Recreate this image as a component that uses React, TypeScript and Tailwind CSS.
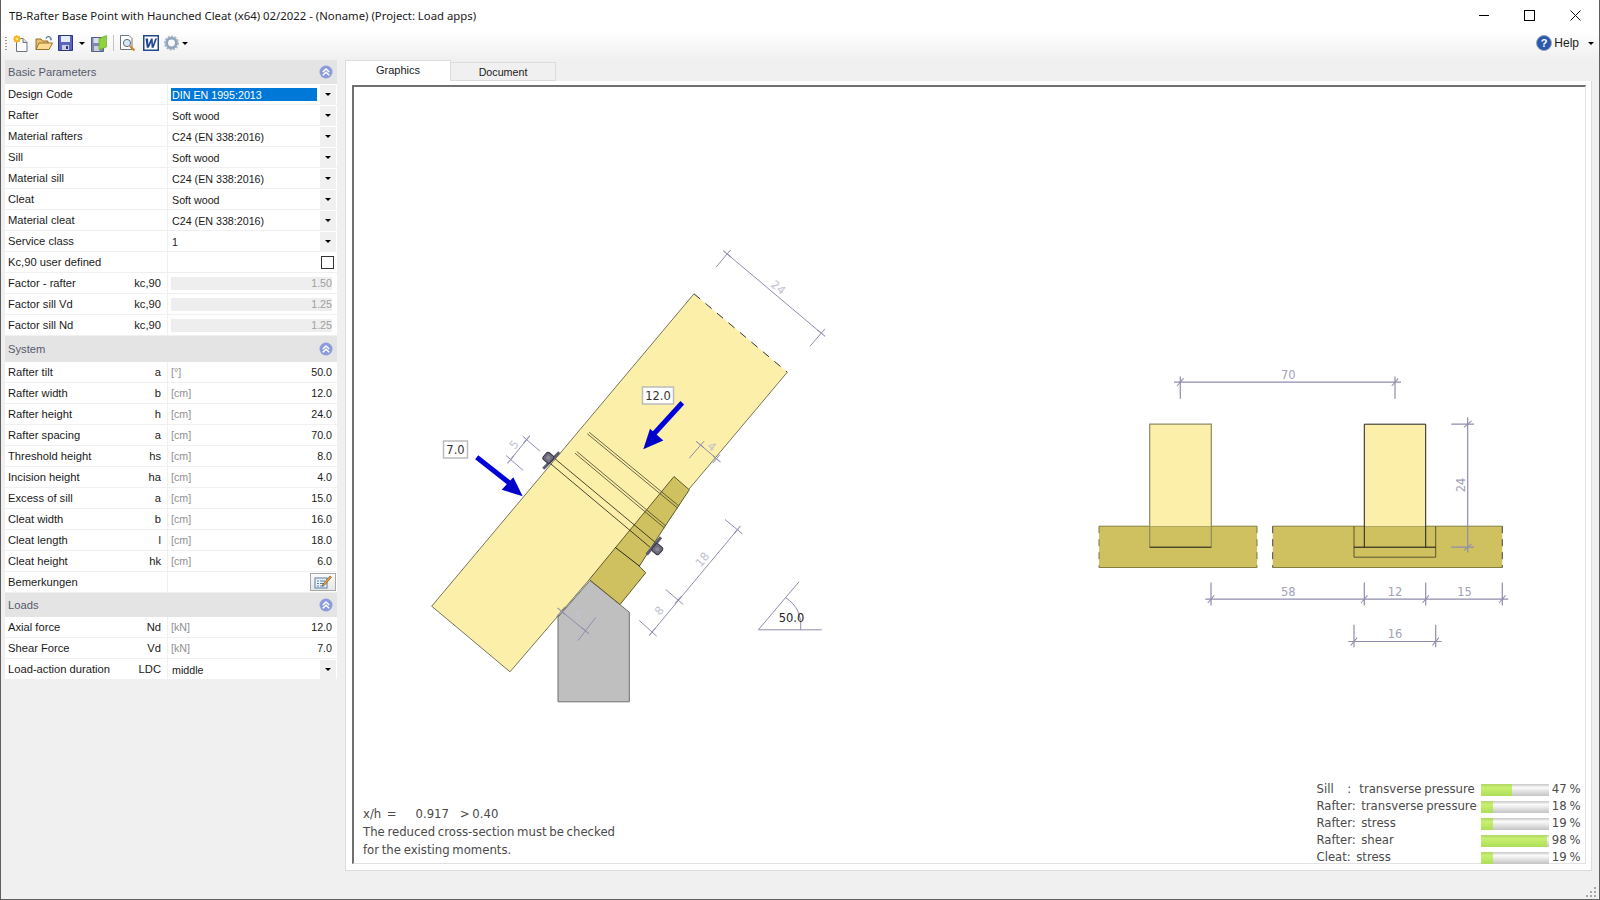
import type { ReactNode } from "react";

const DIM = "#8f8dad";
const DIM_TEXT = "#c3c2d2";
const DIM_TEXT_FLAT = "#a3a2b8";

type Row =
  | { kind: "select"; label: string; sym?: string; value: string; active?: boolean }
  | { kind: "check"; label: string }
  | { kind: "readonly"; label: string; sym: string; value: string }
  | { kind: "number"; label: string; sym: string; unit: string; value: string }
  | { kind: "note"; label: string };

const basicRows: Row[] = [
  { kind: "select", label: "Design Code", value: "DIN EN 1995:2013", active: true },
  { kind: "select", label: "Rafter", value: "Soft wood" },
  { kind: "select", label: "Material rafters", value: "C24 (EN 338:2016)" },
  { kind: "select", label: "Sill", value: "Soft wood" },
  { kind: "select", label: "Material sill", value: "C24 (EN 338:2016)" },
  { kind: "select", label: "Cleat", value: "Soft wood" },
  { kind: "select", label: "Material cleat", value: "C24 (EN 338:2016)" },
  { kind: "select", label: "Service class", value: "1" },
  { kind: "check", label: "Kc,90 user defined" },
  { kind: "readonly", label: "Factor - rafter", sym: "kc,90", value: "1.50" },
  { kind: "readonly", label: "Factor sill Vd", sym: "kc,90", value: "1.25" },
  { kind: "readonly", label: "Factor sill Nd", sym: "kc,90", value: "1.25" },
];

const systemRows: Row[] = [
  { kind: "number", label: "Rafter tilt", sym: "a", unit: "[°]", value: "50.0" },
  { kind: "number", label: "Rafter width", sym: "b", unit: "[cm]", value: "12.0" },
  { kind: "number", label: "Rafter height", sym: "h", unit: "[cm]", value: "24.0" },
  { kind: "number", label: "Rafter spacing", sym: "a", unit: "[cm]", value: "70.0" },
  { kind: "number", label: "Threshold height", sym: "hs", unit: "[cm]", value: "8.0" },
  { kind: "number", label: "Incision height", sym: "ha", unit: "[cm]", value: "4.0" },
  { kind: "number", label: "Excess of sill", sym: "a", unit: "[cm]", value: "15.0" },
  { kind: "number", label: "Cleat width", sym: "b", unit: "[cm]", value: "16.0" },
  { kind: "number", label: "Cleat length", sym: "l", unit: "[cm]", value: "18.0" },
  { kind: "number", label: "Cleat height", sym: "hk", unit: "[cm]", value: "6.0" },
  { kind: "note", label: "Bemerkungen" },
];

const loadRows: Row[] = [
  { kind: "number", label: "Axial force", sym: "Nd", unit: "[kN]", value: "12.0" },
  { kind: "number", label: "Shear Force", sym: "Vd", unit: "[kN]", value: "7.0" },
  { kind: "select", label: "Load-action duration", sym: "LDC", value: "middle" },
];

const results = [
  { label: "Sill     :   transverse pressure", pct: 47 },
  { label: "Rafter:  transverse pressure", pct: 18 },
  { label: "Rafter:  stress", pct: 19 },
  { label: "Rafter:  shear", pct: 98 },
  { label: "Cleat:  stress", pct: 19 },
];

function Caret() {
  return <span className="block h-0 w-0 border-x-[3px] border-t-[3px] border-x-transparent border-t-black" />;
}

function SectionHeader({ title, height }: { title: string; height: string }) {
  return (
    <div className={`flex items-center justify-between bg-[#e4e4e4] pl-[3px] pr-[4px] text-[11.2px] text-[#56596b] ${height}`}>
      <span>{title}</span>
      <svg width="14" height="14" viewBox="0 0 14 14">
        <circle cx="7" cy="7" r="6.5" fill="#8c9bdc" />
        <path d="M3.8 7 7 4l3.2 3M3.8 10.2 7 7.2l3.2 3" fill="none" stroke="#fff" strokeWidth="1.5" />
      </svg>
    </div>
  );
}

function ParamRow({ row, nudge }: { row: Row; nudge?: boolean }) {
  let value: ReactNode = null;
  if (row.kind === "select") {
    value = (
      <div className="flex h-full items-center pl-[3px]">
        <div className={`flex h-[13px] w-[146px] items-center pl-[1px] pt-[1px] ${row.active ? "bg-[#0078d7] text-white" : ""}`}>
          {row.value}
        </div>
        <div className="ml-[3px] flex h-[19px] w-[16px] items-center justify-center bg-[#f0f0f0]">
          <Caret />
        </div>
      </div>
    );
  } else if (row.kind === "check") {
    value = (
      <div className="flex h-full items-center justify-end pr-[3px]">
        <div className="h-[13px] w-[13px] border border-[#333] bg-white" />
      </div>
    );
  } else if (row.kind === "readonly") {
    value = (
      <div className="flex h-full items-center pl-[3px] pr-[5px]">
        <div className="flex h-[13px] w-full items-center justify-end bg-[#eeeeee] text-[#a0a0a0]">{row.value}</div>
      </div>
    );
  } else if (row.kind === "number") {
    value = (
      <div className="flex h-full items-center justify-between pl-[3px] pr-[5px]">
        <span className="text-[#909090]">{row.unit}</span>
        <span>{row.value}</span>
      </div>
    );
  } else {
    value = (
      <div className="flex h-full items-center justify-end pr-[1px]">
        <div className="flex h-[18px] w-[26px] items-center justify-center border border-[#a8a8a8] bg-gradient-to-b from-[#fbfbfb] to-[#e6e6e6]">
          <svg width="18" height="14" viewBox="0 0 18 14">
            <rect x="1" y="3" width="12" height="10" fill="#eaf2fb" stroke="#5b7ea6" />
            <path d="M3 6h2M3 8.5h2M3 11h2M6 6h5M6 8.5h4M6 11h4" stroke="#5b7ea6" strokeWidth="1" />
            <path d="M9 9l7-8 1.5 1.2-7 8-2.2.8z" fill="#e8a33c" stroke="#6a4a14" strokeWidth=".6" />
          </svg>
        </div>
      </div>
    );
  }
  const sym = "sym" in row ? row.sym : undefined;
  return (
    <div className="flex h-[21px] border-b border-[#f0f0f0] bg-white">
      <div className={`flex w-[162px] items-center justify-between pl-[3px] pr-[6px] text-[11.2px] ${nudge ? "pt-[1px]" : ""}`}>
        <span>{row.label}</span>
        {sym && <span>{sym}</span>}
      </div>
      <div className={`flex-1 border-l border-[#f0f0f0] text-[10.7px] ${nudge ? "pt-[1px]" : ""}`}>{value}</div>
    </div>
  );
}

function Seg({ d, c = DIM, w = 1 }: { d: string; c?: string; w?: number }) {
  return <path d={d} fill="none" stroke={c} strokeWidth={w} />;
}

function DimText({ x, y, r = 0, children }: { x: number; y: number; r?: number; children: string }) {
  return (
    <text
      x={x}
      y={y}
      fontSize="11.5"
      fill={r % 90 === 0 ? DIM_TEXT_FLAT : DIM_TEXT}
      textAnchor="middle"
      dominantBaseline="central"
      fontFamily="'DejaVu Sans', sans-serif"
      transform={r ? `rotate(${r} ${x} ${y})` : undefined}
    >
      {children}
    </text>
  );
}

// small slash where a dimension line meets its extension line
function Mark({ x, y, a = -50 }: { x: number; y: number; a?: number }) {
  return <path d="M-5 0H5" stroke={DIM} transform={`translate(${x} ${y}) rotate(${a})`} />;
}

function Bolt({ x, y, x1, y1, x2, y2 }: { x: number; y: number; x1: number; y1: number; x2: number; y2: number }) {
  return (
    <g>
      <line x1={x1} y1={y1} x2={x2} y2={y2} stroke="#5c5c6e" strokeWidth="3" />
      <rect
        x={x - 4.5}
        y={y - 4.5}
        width="9"
        height="9"
        rx="2"
        fill="#6f6f80"
        stroke="#33333f"
        transform={`rotate(40 ${x} ${y})`}
      />
      <circle cx={x} cy={y} r="2" fill="#8a8a9a" />
    </g>
  );
}

function Drawing() {
  const wood = "#fcefa9";
  const sill = "#cfc060";
  return (
    <svg className="absolute inset-0 h-full w-full" viewBox="354 86.5 1231 776">
      {/* rafter, side view */}
      <polygon points="694,293.3 787.3,371.7 688.7,489 589.3,579 510,671.3 431.7,605.7" fill={wood} />
      <path d="M787.3 371.7 688.7 489M694 293.3 431.7 605.7 510 671.3 589.3 579" fill="none" stroke="#77745a" />
      <path d="M694 293.3 787.3 371.7" fill="none" stroke="#333" strokeDasharray="8 7" />

      {/* sill */}
      <polygon points="590,580 629.3,611.7 629.3,701.3 558,701.3 558,616.7" fill="#bfbfbf" stroke="#6f6f6f" />

      {/* cleat */}
      <polygon
        points="674,476 689.3,489.3 662.7,529.3 639.3,565.7 645.7,572.3 620,604 589.3,579"
        fill={sill}
        stroke="#5f5a2c"
      />
      <Seg d="M615 546.7 640 566" c="#2a2a14" />

      {/* screws and bolt */}
      <path d="M587.3 433.3 677.5 507.5M589.2 431.8 679 505.6" fill="none" stroke="#444228" strokeWidth=".8" />
      <path d="M575 452.7 664.5 527.5M576.8 451 666 525.6" fill="none" stroke="#444228" strokeWidth=".8" />
      <path d="M555 458.3 656 542.5M550.7 463.3 650 546.7" fill="none" stroke="#1d1d10" strokeWidth=".8" />
      <Bolt x={548.3} y={457.3} x1={543.3} y1={468.3} x2={559.3} y2={451.7} />
      <Bolt x={657.3} y={548.7} x1={646.7} y1={554} x2={661} y2={536.7} />

      {/* load arrows */}
      <path d="M682.3 402.3 652 435.5" stroke="#0000dc" strokeWidth="5" />
      <polygon points="643.3,448.7 650,428.3 663.3,440" fill="#0000c8" />
      <path d="M476.7 456.7 510 483" stroke="#0000dc" strokeWidth="5" />
      <polygon points="522.7,495.7 513.3,476.7 501.7,489.3" fill="#0000c8" />

      {/* dimensions on the side view */}
      <Seg d="M727 253.3 821.3 332.7M716 266.7 730.7 249.3M810 345.7 825 328.3" />
      <Mark x={727} y={253.3} a={40} />
      <Mark x={821.3} y={332.7} a={40} />
      <DimText x={778.3} y={287} r={40}>24</DimText>
      <Seg d="M526.7 439 510.7 459M522.7 435.7 540 450.7M506 455 523.3 470" />
      <Mark x={526.7} y={439} a={-50} />
      <Mark x={510.7} y={459} a={-50} />
      <DimText x={514} y={444} r={-50}>5</DimText>
      <Seg d="M700 444 716.7 458.3M689.3 457.7 704 440.7M712.7 462.7 720 454" />
      <Mark x={700} y={444} a={40} />
      <Mark x={716.7} y={458.3} a={40} />
      <DimText x={712} y={446} r={40}>4</DimText>
      <Seg d="M561.3 610.7 585 630M556.7 616 565 606M578 640 595.7 617" />
      <Mark x={561.3} y={610.7} a={40} />
      <Mark x={585} y={630} a={40} />
      <DimText x={578.3} y={614.5} r={40}>6</DimText>
      <Seg d="M652.3 631.3 737.3 529.3M639.3 620 656.7 635.7M665.7 589 683.3 604M725 519 742.3 533.3" />
      <Mark x={652.3} y={631.3} a={-50} />
      <Mark x={678.3} y={599.3} a={-50} />
      <Mark x={737.3} y={529.3} a={-50} />
      <DimText x={659.3} y={610} r={-50}>8</DimText>
      <DimText x={702.3} y={559} r={-50}>18</DimText>

      {/* tilt angle */}
      <Seg d="M821.7 629.3H758.3L799 581.3" />
      <Seg d="M785.7 597.3A32 32 0 0 1 800.7 629.3" />
      <text x="791.5" y="617.5" fontSize="11.5" fill="#222" textAnchor="middle" dominantBaseline="central" fontFamily="'DejaVu Sans', sans-serif">
        50.0
      </text>
      <g fill="#fff" stroke="#bcbcbc" strokeWidth="1.5">
        <rect x="642.5" y="386.5" width="31" height="17" />
        <rect x="443.5" y="440.5" width="24" height="17" />
      </g>
      <g fontSize="11.5" fill="#333" textAnchor="middle" dominantBaseline="central" fontFamily="'DejaVu Sans', sans-serif">
        <text x="658" y="395">12.0</text>
        <text x="455.5" y="449">7.0</text>
      </g>

      {/* front view */}
      <rect x="1099" y="525.7" width="158" height="41.3" fill={sill} />
      <rect x="1272.7" y="525.7" width="229.6" height="41.3" fill={sill} />
      <path d="M1099 525.7H1257M1099 567H1257M1272.7 525.7H1502.3M1272.7 567H1502.3" stroke="#85803f" fill="none" />
      <path d="M1099 525.7V567M1257 525.7V567" stroke="#77774c" strokeDasharray="7 6" fill="none" />
      <path d="M1272.7 525.7V567M1502.3 525.7V567" stroke="#444" strokeDasharray="7 6" fill="none" />
      <rect x="1149.7" y="423.7" width="61.6" height="102" fill={wood} />
      <rect x="1364.3" y="423.7" width="61.4" height="102" fill={wood} />
      <path d="M1149.7 546.7V423.7H1211.3V546.7" fill="none" stroke="#8f8a60" strokeWidth="1.2" />
      <path d="M1149.7 546.7H1211.3" stroke="#111" />
      <path d="M1364.3 546.7V423.7H1425.7V546.7" fill="none" stroke="#222" />
      <path d="M1354 525.7V556.7H1435.7V525.7" fill="none" stroke="#5a5630" />
      <path d="M1354 546.7H1435.7" stroke="#111" />

      <Seg d="M1174 381.7H1401M1180.3 376V398.3M1395 376V398.3" w={1.2} />
      <Mark x={1180.3} y={381.7} />
      <Mark x={1395} y={381.7} />
      <DimText x={1288.3} y={374.5}>70</DimText>
      <Seg d="M1467.7 417V552M1451.3 423.7H1474M1451.3 546.7H1474" w={1.2} />
      <Mark x={1467.7} y={423.7} a={-40} />
      <Mark x={1467.7} y={546.7} a={-40} />
      <DimText x={1461} y={484.5} r={-90}>24</DimText>
      <Seg d="M1205.3 598.7H1508.3M1211 582V605M1364.3 582V605M1425.7 582V605M1502.3 582V605" w={1.2} />
      <Mark x={1211} y={598.7} />
      <Mark x={1364.3} y={598.7} />
      <Mark x={1425.7} y={598.7} />
      <Mark x={1502.3} y={598.7} />
      <DimText x={1288.3} y={591.5}>58</DimText>
      <DimText x={1395} y={591.5}>12</DimText>
      <DimText x={1464.5} y={591.5}>15</DimText>
      <Seg d="M1348.3 641H1441.7M1354 624.3V646.7M1435.7 624.3V646.7" w={1.2} />
      <Mark x={1354} y={641} />
      <Mark x={1435.7} y={641} />
      <DimText x={1395} y={633.5}>16</DimText>
    </svg>
  );
}

function ToolbarIcons() {
  return (
    <div className="flex items-center">
      {/* grip */}
      <div className="ml-[4px] flex flex-col gap-[2px]">
        <span className="h-[1px] w-[2px] bg-[#9a9a9a]" />
        <span className="h-[1px] w-[2px] bg-[#9a9a9a]" />
        <span className="h-[1px] w-[2px] bg-[#9a9a9a]" />
        <span className="h-[1px] w-[2px] bg-[#9a9a9a]" />
        <span className="h-[1px] w-[2px] bg-[#9a9a9a]" />
      </div>
      {/* new */}
      <svg className="ml-[6px]" width="15" height="17" viewBox="0 0 15 17">
        <path d="M3.5 3.5H10L14 7.5V16.5H3.5Z" fill="#fdfdfd" stroke="#6e7580" />
        <path d="M10 3.5V7.5H14" fill="#dfe4ea" stroke="#6e7580" />
        <circle cx="4" cy="4" r="3.2" fill="#f7b21e" />
        <path d="M4 0V8M0 4H8M1.2 1.2 6.8 6.8M6.8 1.2 1.2 6.8" stroke="#f7b21e" strokeWidth="1" />
        <circle cx="4" cy="4" r="1.4" fill="#ffe680" />
      </svg>
      {/* open */}
      <svg className="ml-[7px]" width="18" height="16" viewBox="0 0 18 16">
        <path d="M1 4H6L7.5 6H13V14.5H1Z" fill="#e9c06c" stroke="#97712a" />
        <path d="M1 14.5 4 8H17.5L14 14.5Z" fill="#f9dc91" stroke="#97712a" />
        <path d="M11 3.5C12 1 15 1 16 3.5" fill="none" stroke="#5a7ca6" strokeWidth="1.3" />
        <path d="M14.5 3.5H17.3L16 6Z" fill="#5a7ca6" />
      </svg>
      {/* save */}
      <svg className="ml-[5px]" width="15" height="16" viewBox="0 0 15 16">
        <path d="M.5 .5H14.5V15.5H.5Z" fill="#5a64c0" stroke="#2d3580" />
        <rect x="3" y="1" width="9" height="6" fill="#e6ecf8" />
        <rect x="4" y="10" width="7" height="5" fill="#cdd0dc" />
        <rect x="8" y="11" width="2" height="3" fill="#2d3580" />
      </svg>
      <span className="ml-[6px] flex w-[6px] justify-center">
        <Caret />
      </span>
      {/* save all */}
      <svg className="ml-[6px]" width="16" height="17" viewBox="0 0 16 17">
        <path d="M.5 2.5H12.5V16.5H.5Z" fill="#7f88b0" stroke="#555f90" />
        <rect x="2.5" y="3" width="8" height="5" fill="#d9dfee" />
        <rect x="3" y="11" width="6" height="5" fill="#cdd0dc" />
        <path d="M8 3.5 15.5 .5V12L8 15Z" fill="#8fd23c" stroke="#5aa01e" strokeWidth=".6" />
      </svg>
      <span className="ml-[6px] h-[16px] w-[1px] bg-[#c4c4c4]" />
      {/* print preview */}
      <svg className="ml-[6px]" width="16" height="17" viewBox="0 0 16 17">
        <path d="M.5 .5H9L12 3.5V14.5H.5Z" fill="#fff" stroke="#70767f" />
        <circle cx="7" cy="8" r="3.6" fill="#d8e8f6" stroke="#5a6a80" />
        <path d="M10 11 14.5 15.5" stroke="#cc8a2e" strokeWidth="2.2" />
      </svg>
      {/* word */}
      <svg className="ml-[7px]" width="16" height="16" viewBox="0 0 16 16">
        <rect width="16" height="16" fill="#22488f" />
        <rect x="1.5" y="1.5" width="13" height="13" fill="#fff" />
        <path d="M2.5 3.5H5L5.4 9.5 8 3.5H9.6L10 9.5 12.2 3.5H14L10.6 12.8H8.6L8.2 7.5 5.8 12.8H3.8Z" fill="#22488f" />
      </svg>
      {/* settings */}
      <svg className="ml-[5px]" width="15" height="16" viewBox="0 0 16 16">
        <circle cx="8" cy="8" r="5.2" fill="none" stroke="#8fa3bc" strokeWidth="3" />
        <circle cx="8" cy="8" r="7" fill="none" stroke="#a9b6c6" strokeWidth="2" strokeDasharray="2.2 1.4" />
      </svg>
      <span className="ml-[3px] flex">
        <Caret />
      </span>
    </div>
  );
}

export default function App() {
  return (
    <div className="relative flex h-[900px] w-[1600px] flex-col overflow-hidden border-x border-b border-[#5f5f5f] bg-[#f0f0f0] font-['Liberation_Sans',sans-serif] text-[12px] text-[#1a1a1a]">
      {/* Title bar */}
      <div className="flex h-[31px] shrink-0 items-center bg-white pl-[8px] font-['Noto_Sans',sans-serif]">
        <span className="flex-1 text-[11.35px]">
          TB-Rafter Base Point with Haunched Cleat (x64) 02/2022 - (Noname) (Project: Load apps)
        </span>
        <div className="flex items-center">
          <span className="h-[1px] w-[10px] bg-black" />
          <span className="ml-[35px] h-[11px] w-[11px] border border-black" />
          <svg className="ml-[35px] mr-[18px]" width="11" height="11" viewBox="0 0 11 11">
            <path d="M.5.5l10 10M10.5.5l-10 10" stroke="#111" />
          </svg>
        </div>
      </div>

      {/* Toolbar */}
      <div className="flex h-[29px] shrink-0 items-center justify-between bg-gradient-to-b from-white to-[#f0f0f0] pb-[5px]">
        <ToolbarIcons />
        <div className="flex items-center">
          <svg width="16" height="16" viewBox="0 0 16 16">
            <circle cx="8" cy="8" r="7.5" fill="#2a58ad" stroke="#9aa4b4" />
            <text x="8" y="12" fontSize="11" fontWeight="700" textAnchor="middle" fill="#fff" fontFamily="'Liberation Sans', sans-serif">
              ?
            </text>
          </svg>
          <span className="ml-[2px]">Help</span>
          <span className="ml-[9px] mr-[5px] flex">
            <Caret />
          </span>
        </div>
      </div>

      <div className="flex min-h-0 flex-1">
        {/* Parameter panel */}
        <div className="ml-[4px] w-[332px] shrink-0">
          <SectionHeader title="Basic Parameters" height="h-[24px]" />
          {basicRows.map((r) => (
            <ParamRow key={r.label} row={r} nudge />
          ))}
          <SectionHeader title="System" height="h-[26px]" />
          {systemRows.map((r) => (
            <ParamRow key={r.label} row={r} />
          ))}
          <SectionHeader title="Loads" height="h-[24px]" />
          {loadRows.map((r) => (
            <ParamRow key={r.label} row={r} nudge />
          ))}
        </div>

        {/* Tabs and graphics page */}
        <div className="ml-[8px] flex w-[1247px] flex-col pb-[28px]">
          <div className="flex h-[21px] shrink-0 items-end">
            <div className="flex h-[21px] w-[106px] items-start justify-center border-x border-t border-[#dcdcdc] bg-white pt-[1px] text-[11px]">
              Graphics
            </div>
            <div className="flex h-[19px] w-[105px] items-center justify-center border-y border-r border-[#dcdcdc] bg-[#f0f0f0] pt-[1px] text-[10.7px]">
              Document
            </div>
          </div>
          <div className="flex min-h-0 flex-1 flex-col border border-t-0 border-[#dcdcdc] bg-white pb-[6px] pl-[6px] pr-[5px] pt-[4px]">
            <div className="relative flex flex-1 items-end justify-between border-b border-l-2 border-r border-t-2 border-[#e2e2e2] border-l-[#707070] border-t-[#707070] font-['DejaVu_Sans',sans-serif] text-[11.7px] text-[#4a4a4a] [word-spacing:-1px]">
              <Drawing />
              <div className="relative mb-[4px] ml-[9px] leading-[18px]">
                <div className="whitespace-pre">{"x/h  =       0.917    > 0.40"}</div>
                <div>The reduced cross-section must be checked</div>
                <div>for the existing moments.</div>
              </div>
              <div className="relative -mb-[3px] mr-[4.5px]">
                {results.map((r) => (
                  <div key={r.label} className="flex h-[17px] items-center">
                    <span className="w-[164px] whitespace-pre">{r.label}</span>
                    <div className="h-[12px] w-[68px] bg-gradient-to-b from-[#c8c8c8] via-[#fbfbfb] via-30% to-[#c4c4c4]">
                      <div
                        className="h-full bg-gradient-to-b from-[#b0d566] via-[#c8f070] via-30% to-[#aede58]"
                        style={{ width: `${r.pct}%` }}
                      />
                    </div>
                    <span className="w-[32px] text-right">{r.pct} %</span>
                  </div>
                ))}
              </div>
            </div>
          </div>
        </div>
      </div>

      {/* Resize grip */}
      <svg className="absolute bottom-[1px] right-[2px]" width="11" height="11" viewBox="0 0 11 11" fill="#a8a8a8">
        <rect x="8" y="0" width="2" height="2" />
        <rect x="4" y="4" width="2" height="2" />
        <rect x="8" y="4" width="2" height="2" />
        <rect x="0" y="8" width="2" height="2" />
        <rect x="4" y="8" width="2" height="2" />
        <rect x="8" y="8" width="2" height="2" />
      </svg>
    </div>
  );
}
